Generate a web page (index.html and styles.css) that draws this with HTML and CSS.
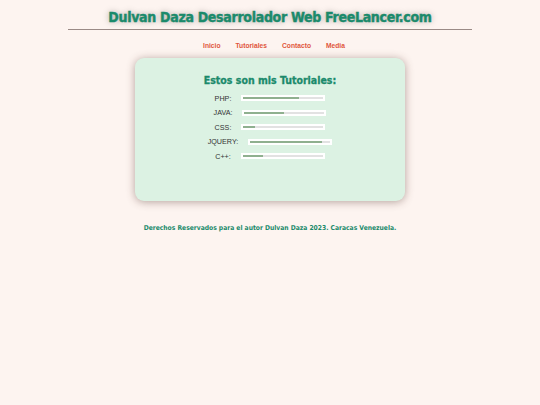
FILE: index.html
```html
<!DOCTYPE html>
<html>
<head>
<meta charset="utf-8">
<link rel="stylesheet" href="styles.css">
</head>
<body>
<header class="header">
  <h1 class="title">Dulvan Daza Desarrolador Web FreeLancer.com</h1>
  <hr class="rule">
  <nav class="nav">
    <a href="#">Inicio</a>
    <a href="#">Tutoriales</a>
    <a href="#">Contacto</a>
    <a href="#">Media</a>
  </nav>
</header>
<main class="card">
  <h2 class="card-title">Estos son mis Tutoriales:</h2>
  <div class="row"><span class="label">PHP:</span><span class="bar"><span class="track"><span class="fill" style="width:70%"></span></span></span></div>
  <div class="row"><span class="label">JAVA:</span><span class="bar"><span class="track"><span class="fill" style="width:50%"></span></span></span></div>
  <div class="row"><span class="label">CSS:</span><span class="bar"><span class="track"><span class="fill" style="width:15%"></span></span></span></div>
  <div class="row"><span class="label">JQUERY:</span><span class="bar"><span class="track"><span class="fill" style="width:90%"></span></span></span></div>
  <div class="row"><span class="label">C++:</span><span class="bar"><span class="track"><span class="fill" style="width:25%"></span></span></span></div>
</main>
<footer class="footer">Derechos Reservados para el autor Dulvan Daza 2023. Caracas Venezuela.</footer>
</body>
</html>
```
FILE: styles.css
```css
html, body {
  margin: 0;
  padding: 0;
}
body {
  background: #fdf4f0;
  font-family: "Liberation Sans", Arial, sans-serif;
  width: 540px;
  min-height: 405px;
}
.header {
  padding-top: 8px;
  text-align: center;
}
.title {
  margin: 0;
  font-family: "DejaVu Sans Condensed", "DejaVu Sans", sans-serif;
  font-stretch: condensed;
  font-weight: bold;
  font-size: 14px;
  letter-spacing: -0.3px;
  line-height: 18px;
  color: #1b8a6b;
  -webkit-text-stroke: 0.4px #1b8a6b;
  text-shadow: 0 0 6px rgba(0,0,0,0.35);
}
.rule {
  margin: 3px 68px 0;
  border: 0;
  border-top: 1px solid #9a8a86;
  height: 0;
}
.nav {
  display: flex;
  justify-content: center;
  gap: 15px;
  margin-top: 12px;
  padding-left: 8px;
  padding-bottom: 8px;
}
.nav a {
  font-size: 6.7px;
  font-weight: bold;
  color: #e0563c;
  text-decoration: none;
}
.card {
  width: 270px;
  height: 143px;
  box-sizing: border-box;
  margin: 1px auto 0;
  background: #dcf2e3;
  border-radius: 9px;
  box-shadow: 0 1px 8px rgba(90,60,50,0.45);
  padding-top: 15px;
}
.card-title {
  margin: 0 0 4px;
  text-align: center;
  font-family: "DejaVu Sans Condensed", "DejaVu Sans", sans-serif;
  font-stretch: condensed;
  font-weight: bold;
  font-size: 10.5px;
  line-height: 14px;
  color: #1b8a6b;
  -webkit-text-stroke: 0.3px #1b8a6b;
}
.row {
  display: flex;
  justify-content: center;
  align-items: center;
  gap: 10px;
  height: 14.5px;
}
.label {
  font-size: 7.2px;
  color: #333;
}
.bar {
  display: block;
  width: 80px;
  padding: 2px;
  background: #fff;
}
.track {
  display: block;
  height: 2px;
  background: #e2e2e2;
}
.fill {
  display: block;
  height: 2px;
  background: #8fb08f;
}
.footer {
  margin-top: 23px;
  text-align: center;
  font-family: "DejaVu Sans Condensed", "DejaVu Sans", sans-serif;
  font-stretch: condensed;
  font-weight: bold;
  font-size: 6.7px;
  color: #1b8a6b;
}
```
